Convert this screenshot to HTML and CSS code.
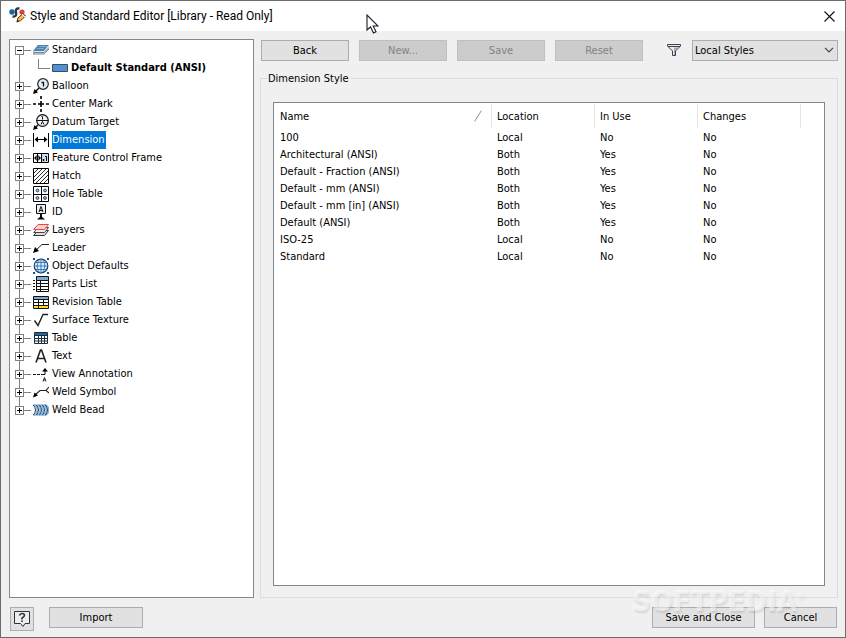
FILE: index.html
```html
<!DOCTYPE html>
<html lang="en">
<head>
<meta charset="utf-8">
<title>Style and Standard Editor</title>
<link rel="stylesheet" href="styles.css">
</head>
<body>
<div class="window">
  <header class="titlebar">
    <svg class="app-icon" width="18" height="18" viewBox="0 0 18 18"><circle cx="3" cy="5" r="2.700" fill="#1763a8"/><circle cx="13" cy="5" r="2.600" fill="#e23c43"/><path d="M10.500 1.500C7 1 6.500 3 7 5.500S7 10 3.500 9.500" fill="none" stroke="#30343c" stroke-width="2.400"/><path d="M8 14.500 9 11l5-4.500 2.500 2.500-5 4.700z" fill="#f3bd54" stroke="#5b3410"/><path d="m13 7 3 3" stroke="#fff"/><path d="m7.500 15.500 1-2.500 1.500 1.500z" fill="#111"/></svg>
    <h1 class="title">Style and Standard Editor [Library - Read Only]</h1>
    <button class="close" type="button" aria-label="Close"><svg width="11" height="11" viewBox="0 0 11 11"><path d="m.5.5 10 10M10.500.5l-10 10" stroke="#111" stroke-width="1.100"/></svg></button>
  </header>

  <main class="content">
    <ul class="tree">
      <li class="node">
        <div class="row"><button class="toggle open" type="button" aria-label="Collapse Standard"></button>
          <svg class="icon" viewBox="0 0 16 16"><path d="M5 3h11l-5 6H0z" fill="#4d80ae"/><path d="M6 4.500h8M4 6.500h7" stroke="#86abd0"/><path d="M0 9v3h11l5-5V3l-5 6z" fill="#dfe5ea"/><path d="M0 9v3h11l5-5M1 10.500h10l5-5" fill="none" stroke="#567086" stroke-width=".8"/></svg>
          <span class="label">Standard</span></div>
        <ul class="children"><li class="child"><svg class="icon" viewBox="0 0 16 16"><path d="M.5 4.500h15v7H.5z" fill="#4b92d8" stroke="#414b50"/></svg><span class="label strong">Default Standard (ANSI)</span></li></ul>
      </li>
      <li class="node"><div class="row"><button class="toggle" type="button" aria-label="Expand Balloon"></button>
        <svg class="icon" viewBox="0 0 16 16"><path d="m6 10-4 4" stroke="#111" stroke-width="1.400"/><circle cx="10" cy="6" r="5.300" fill="#e4edf6" stroke="#222" stroke-width="1.200"/><path d="M8.500 4.500h2v4" fill="none" stroke="#111" stroke-width="1.300"/><path d="m0 16 1.500-5L5 14.500z"/></svg><span class="label">Balloon</span></div></li>
      <li class="node"><div class="row"><button class="toggle" type="button" aria-label="Expand Center Mark"></button>
        <svg class="icon" viewBox="0 0 16 16"><path d="M0 8h3m2 0h6m2 0h3M8 0v3m0 2v6m0 2v3" stroke="#000" stroke-width="1.600"/></svg><span class="label">Center Mark</span></div></li>
      <li class="node"><div class="row"><button class="toggle" type="button" aria-label="Expand Datum Target"></button>
        <svg class="icon" viewBox="0 0 16 16"><path d="m5 11-3 3" stroke="#111" stroke-width="1.400"/><circle cx="9.500" cy="6.500" r="5.800" fill="#f0f4f8" stroke="#111" stroke-width="1.200"/><path d="M3.500 6.500h12M8.500 2.500h1v3M8 10.500l1.500-3 1.500 3" fill="none" stroke="#111"/><path d="m0 16 1.500-5L5 14.500z"/></svg><span class="label">Datum Target</span></div></li>
      <li class="node"><div class="row"><button class="toggle" type="button" aria-label="Expand Dimension"></button>
        <svg class="icon" viewBox="0 0 16 16"><path d="M.5 1v14M15.500 1v14M2 7.500h12" stroke="#000"/><path d="m1.500 7.500 3.500-3v6zM14.500 7.500l-3.500-3v6z"/></svg><span class="label selected">Dimension</span></div></li>
      <li class="node"><div class="row"><button class="toggle" type="button" aria-label="Expand Feature Control Frame"></button>
        <svg class="icon" viewBox="0 0 16 16"><path d="M.5 3.500h15v9H.5z" fill="#fff" stroke="#000"/><path d="M9 4h6v8H9z" fill="#cbdceb"/><path d="M8.500 4v8M4.500 4v8M1 8h7" stroke="#000"/><circle cx="4.500" cy="8" r="2.200" fill="none" stroke="#000"/><path d="M10 9.500h1v1h-1zM12 6.500h1.500v4.500" fill="none" stroke="#000"/></svg><span class="label">Feature Control Frame</span></div></li>
      <li class="node"><div class="row"><button class="toggle" type="button" aria-label="Expand Hatch"></button>
        <svg class="icon" viewBox="0 0 16 16"><path d="M.5.5h15v15H.5z" fill="#fff" stroke="#000"/><path d="m1 5 4-4M1 9l8-8M1 13 13 1M3 15 15 3M7 15l8-8M11 15l4-4" stroke="#111" stroke-width=".9"/></svg><span class="label">Hatch</span></div></li>
      <li class="node"><div class="row"><button class="toggle" type="button" aria-label="Expand Hole Table"></button>
        <svg class="icon" viewBox="0 0 16 16"><path d="M.5.5h15v15H.5zM8.500 1v14M1 8.500h14" fill="#fff" stroke="#000"/><g fill="#9cc0e2" stroke="#284560"><circle cx="4.500" cy="4.500" r="1.400"/><circle cx="12" cy="4.500" r="1.400"/><circle cx="4.500" cy="12" r="1.400"/><circle cx="12" cy="12" r="1.400"/></g></svg><span class="label">Hole Table</span></div></li>
      <li class="node"><div class="row"><button class="toggle" type="button" aria-label="Expand ID"></button>
        <svg class="icon" viewBox="0 0 16 16"><path d="M3.500.5h9v9h-9z" fill="#e8eef5" stroke="#111"/><path d="m6 8 2-5.500L10 8M6.700 6.500h2.600" fill="none" stroke="#111"/><path d="M8 10v4" stroke="#111" stroke-width="2"/><path d="m8 12 4 3.500H4z"/></svg><span class="label">ID</span></div></li>
      <li class="node"><div class="row"><button class="toggle" type="button" aria-label="Expand Layers"></button>
        <svg class="icon" viewBox="0 0 16 16"><path d="M5 8.500h10.500l-4 5H.7z" fill="#ddd" stroke="#333"/><path d="M5 5.500h10.500l-4 5H.7z" fill="#eee" stroke="#444"/><path d="M5 2.500h10.500l-4 5H.7z" fill="#fbd0cf" stroke="#e34a4a"/></svg><span class="label">Layers</span></div></li>
      <li class="node"><div class="row"><button class="toggle" type="button" aria-label="Expand Leader"></button>
        <svg class="icon" viewBox="0 0 16 16"><path d="m2 11 7-6.500h7" fill="none" stroke="#222"/><path d="m0 13 2-6 4 4z"/></svg><span class="label">Leader</span></div></li>
      <li class="node"><div class="row"><button class="toggle" type="button" aria-label="Expand Object Defaults"></button>
        <svg class="icon" viewBox="0 0 16 16"><path d="M0 0h2v2H0zM14 0h2v2h-2zM0 14h2v2H0zM14 14h2v2h-2z" fill="#17578b"/><circle cx="8" cy="8" r="6.800" fill="#dceafb" stroke="#123a5f" stroke-width="1.200"/><path d="M1 8h14M8 1v14M2.500 4.500h11M2.500 11.500h11" stroke="#2f73b3" stroke-width=".9"/><ellipse cx="8" cy="8" rx="3.800" ry="6.800" fill="none" stroke="#2f73b3" stroke-width=".9"/></svg><span class="label">Object Defaults</span></div></li>
      <li class="node"><div class="row"><button class="toggle" type="button" aria-label="Expand Parts List"></button>
        <svg class="icon" viewBox="0 0 16 16"><path d="M3.500.5h12v15h-12z" fill="#fff" stroke="#111"/><path d="M4 1h11v3H4z" fill="#7fa9d6"/><path d="M4 4.500h11M4 7.500h11M4 10.500h11M4 13.500h11M7.500 4v11" stroke="#111"/><path d="M0 4.500h2M0 7.500h2M0 10.500h2M0 13.500h2" stroke="#111"/></svg><span class="label">Parts List</span></div></li>
      <li class="node"><div class="row"><button class="toggle" type="button" aria-label="Expand Revision Table"></button>
        <svg class="icon" viewBox="0 0 16 16"><path d="M.5 2.500h15v12H.5z" fill="#fff" stroke="#111"/><path d="M1 3h14v2H1z" fill="#7fa9d6"/><path d="M1 12h14v2H1z" fill="#ffdb21"/><path d="M1 5.500h14M1 8.500h14M1 11.500h14M5.500 5v9M10.500 5v6" stroke="#111"/></svg><span class="label">Revision Table</span></div></li>
      <li class="node"><div class="row"><button class="toggle" type="button" aria-label="Expand Surface Texture"></button>
        <svg class="icon" viewBox="0 0 16 16"><path d="M1.500 8.500 5 13.500l5-11h5" fill="none" stroke="#222" stroke-width="1.400"/></svg><span class="label">Surface Texture</span></div></li>
      <li class="node"><div class="row"><button class="toggle" type="button" aria-label="Expand Table"></button>
        <svg class="icon" viewBox="0 0 16 16"><path d="M1.500 2.500h13v11h-13z" fill="#fff" stroke="#182c3d"/><path d="M2 3h12v2H2z" fill="#2c6493"/><path d="M2 5.500h12M2 8.500h12M2 11h12M5.500 5v9M8.500 5v9M11.500 5v9" stroke="#182c3d"/></svg><span class="label">Table</span></div></li>
      <li class="node"><div class="row"><button class="toggle" type="button" aria-label="Expand Text"></button>
        <svg class="icon" viewBox="0 0 16 16"><path d="M3 14.500 7.500 2h1L13 14.500M5 10.500h6" fill="none" stroke="#222" stroke-width="1.600"/></svg><span class="label">Text</span></div></li>
      <li class="node"><div class="row"><button class="toggle" type="button" aria-label="Expand View Annotation"></button>
        <svg class="icon" viewBox="0 0 16 16"><path d="M0 8.500h3m1 0h3m1 0h4V4" fill="none" stroke="#111"/><path d="m12 2 3 3.500H9z"/><path d="m10 15.500 1.500-4 1.500 4M10.500 14h2" fill="none" stroke="#111" stroke-width=".9"/></svg><span class="label">View Annotation</span></div></li>
      <li class="node"><div class="row"><button class="toggle" type="button" aria-label="Expand Weld Symbol"></button>
        <svg class="icon" viewBox="0 0 16 16"><path d="m2 11 5-4.500h6m3-3.500-3 3.500L16 9" fill="none" stroke="#222" stroke-width="1.100"/><path d="m0 13.500 1.500-5 3.500 3z"/></svg><span class="label">Weld Symbol</span></div></li>
      <li class="node"><div class="row"><button class="toggle" type="button" aria-label="Expand Weld Bead"></button>
        <svg class="icon" viewBox="0 0 16 16"><path d="m1 2.500 3 3v5l-3 3M4 2.500l3 3v5l-3 3M7 2.500l3 3v5l-3 3M10 2.500l3 3v5l-3 3M12.500 2.500l3 3v5l-3 3" fill="none" stroke="#7fb4e2" stroke-width="1.500"/><path d="M0 2.500q5 5.500 0 11M3 2.500q5 5.500 0 11M6 2.500q5 5.500 0 11M9 2.500q5 5.500 0 11M12 2.500q5 5.500 0 11" fill="none" stroke="#1c3c5c"/></svg><span class="label">Weld Bead</span></div></li>
    </ul>

    <section class="details">
      <div class="toolbar">
        <button class="btn" type="button">Back</button>
        <button class="btn" type="button" disabled>New...</button>
        <button class="btn" type="button" disabled>Save</button>
        <button class="btn" type="button" disabled>Reset</button>
        <label class="filter" for="scope" aria-label="Filter styles"><svg width="16" height="14" viewBox="0 0 16 14"><path d="M1.500 1.500h13V3L9.500 8v4.500h-3V8l-5-5z" fill="#eceef1" stroke="#3b414c"/><path d="M2 3.500h12" stroke="#3b414c"/><path d="M8 4.500h4l-3 3V12H8z" fill="#a3a9b2"/></svg></label>
        <span class="combo"><select id="scope"><option>Local Styles</option></select><svg class="chevron" width="10" height="6" viewBox="0 0 10 6"><path d="m1 .8 4 4 4-4" fill="none" stroke="#444" stroke-width="1.200"/></svg></span>
      </div>
      <fieldset class="group">
        <legend>Dimension Style</legend>
        <div class="list">
          <table>
            <colgroup><col class="name-col"><col class="data-col"><col class="data-col"><col class="data-col"><col></colgroup>
            <thead><tr>
              <th><span class="sorted">Name<svg width="8" height="12" viewBox="0 0 8 12"><path d="m.5 11.500 7-11" stroke="#909090"/></svg></span></th><th>Location</th><th>In Use</th><th>Changes</th><td></td></tr></thead>
            <tbody>
              <tr><td>100</td><td>Local</td><td>No</td><td>No</td><td></td></tr>
              <tr><td>Architectural (ANSI)</td><td>Both</td><td>Yes</td><td>No</td><td></td></tr>
              <tr><td>Default - Fraction (ANSI)</td><td>Both</td><td>Yes</td><td>No</td><td></td></tr>
              <tr><td>Default - mm (ANSI)</td><td>Both</td><td>Yes</td><td>No</td><td></td></tr>
              <tr><td>Default - mm [in] (ANSI)</td><td>Both</td><td>Yes</td><td>No</td><td></td></tr>
              <tr><td>Default (ANSI)</td><td>Both</td><td>Yes</td><td>No</td><td></td></tr>
              <tr><td>ISO-25</td><td>Local</td><td>No</td><td>No</td><td></td></tr>
              <tr><td>Standard</td><td>Local</td><td>No</td><td>No</td><td></td></tr>
            </tbody>
          </table>
        </div>
      </fieldset>
    </section>
  </main>

  <footer class="footer">
    <button class="help" type="button" aria-label="Help"><svg width="18" height="18" viewBox="0 0 18 18"><path d="M1.500 1.500h15v12H12l-2 3-2.500-3h-6z" fill="#eceef0" stroke="#30343c"/><path d="M6.500 5.500Q7 3.500 9 3.500q2.500 0 2.500 1.800Q11.500 6.500 9 8v1.500M9 10.500V12" fill="none" stroke="#30343c" stroke-width="1.600"/></svg></button>
    <button class="btn import" type="button">Import</button>
    <button class="btn save-close" type="button">Save and Close</button>
    <button class="btn cancel" type="button">Cancel</button>
  </footer>
  <div class="watermark">SOFTPEDIA<span class="mark">®</span></div>
  <svg class="pointer" width="13" height="20" viewBox="0 0 13 20"><path d="M1 1v15l3.500-3 3 6 2.500-1.200L7.200 12H12z" fill="#fff" stroke="#1b1b2a" stroke-width="1.100"/></svg>
</div>
</body>
</html>
```
FILE: styles.css
```css
* { box-sizing: border-box; }

body {
  margin: 0;
  color: #000;
  font: 11px/17px "DejaVu Sans Condensed", "Noto Sans", sans-serif;
}

button, select { font: inherit; color: inherit; padding: 0; margin: 0; border-radius: 0; }
ul { list-style: none; margin: 0; padding: 0; }
svg { display: block; flex: none; }

.window {
  position: relative;
  display: flex;
  flex-direction: column;
  min-height: 100vh;
  border: 1px solid #6b6b6b;
  background: #f0f0f0;
}

.titlebar {
  display: flex;
  align-items: center;
  height: 30px;
  padding: 0 10px 0 8px;
  background: #fff;
}
.title { margin: 0 auto 0 3px; font: 12px/18px Roboto, "Noto Sans", sans-serif; }
.close { border: 0; background: none; }

.content { display: flex; flex: 1; gap: 6px; padding: 8px 7px 0 8px; }

.tree {
  flex: 0 0 245px;
  padding: 1px 0 0 5px;
  border: 1px solid #828790;
  background: #fff;
}
.node {
  background: linear-gradient(#808080, #808080) 4px 0 / 1px 100% no-repeat;
}
.node:first-child { background-position: 4px 9px; }
.node:last-child { background-size: 1px 9px; }
.row {
  display: flex;
  align-items: center;
  height: 18px;
  background: linear-gradient(#808080, #808080) 9px 9px / 7px 1px no-repeat;
}
.toggle {
  width: 9px;
  height: 9px;
  margin-right: 9px;
  border: 1px solid #808080;
  background:
    linear-gradient(#000, #000) center / 5px 1px no-repeat,
    linear-gradient(#000, #000) center / 1px 5px no-repeat,
    #fff;
}
.toggle.open { background: linear-gradient(#000, #000) center / 5px 1px no-repeat, #fff; }
.icon { width: 16px; height: 16px; }
.label { margin-left: 3px; line-height: 18px; }
.selected { padding-right: 1px; background: #0078d7; color: #fff; }
.strong { font-weight: bold; }
.child {
  display: flex;
  align-items: center;
  height: 18px;
  padding-left: 37px;
  background:
    linear-gradient(#808080, #808080) 23px 0 / 1px 9px no-repeat,
    linear-gradient(#808080, #808080) 23px 9px / 12px 1px no-repeat;
}

.details { display: flex; flex: 1; flex-direction: column; min-width: 0; }
.toolbar { display: flex; align-items: center; gap: 10px; height: 22px; padding-left: 1px; }
.btn {
  width: 88px;
  height: 21px;
  border: 1px solid #adadad;
  background: #e1e1e1;
}
.btn:disabled { border-color: #bfbfbf; background: #ccc; color: #838383; }
.filter { margin-left: auto; }
.combo { display: grid; align-items: center; width: 146px; }
.combo select {
  grid-area: 1 / 1;
  height: 21px;
  padding: 0 2px;
  border: 1px solid #adadad;
  background: #e1e1e1;
  appearance: none;
}
.chevron { grid-area: 1 / 1; justify-self: end; margin-right: 4px; pointer-events: none; }

.group {
  display: flex;
  flex: 1;
  min-width: 0;
  margin: 9px 0 0;
  padding: 15px 12px 11px;
  border: 1px solid #dcdcdc;
}
.group legend { margin-left: -6px; padding: 0 2px 0 1px; }
.list { flex: 1; border: 1px solid #828790; background: #fff; }

table { width: 100%; table-layout: fixed; border-collapse: collapse; }
.name-col { width: 218px; }
.data-col { width: 103px; }
th, td { height: 17px; padding: 0 5px; text-align: left; font-weight: normal; white-space: nowrap; }
th:first-child, td:first-child { padding-left: 6px; }
th {
  height: 26px;
  background: linear-gradient(#e5e5e5, #e5e5e5) right 1px / 1px 24px no-repeat;
}
.sorted { display: flex; align-items: center; justify-content: space-between; padding-right: 5px; }

.footer { display: flex; gap: 9px; padding: 9px 8px 6px 9px; }
.help { display: grid; place-items: center; width: 24px; height: 24px; border: 1px solid #adadad; background: #e1e1e1; }
.import { width: 94px; margin: 0 auto 0 6px; }
.save-close { width: 103px; }
.cancel { width: 73px; }

.watermark {
  position: absolute;
  right: 40px;
  bottom: 25px;
  color: rgba(255, 255, 255, 0.55);
  font: bold 29px/22px "DejaVu Sans Condensed", sans-serif;
  text-shadow: 1px 2px 2px rgba(0, 0, 0, 0.1);
  pointer-events: none;
}
.mark { font-size: 9px; line-height: 9px; vertical-align: 12px; }
.pointer { position: absolute; left: 365px; top: 13px; pointer-events: none; }
```
